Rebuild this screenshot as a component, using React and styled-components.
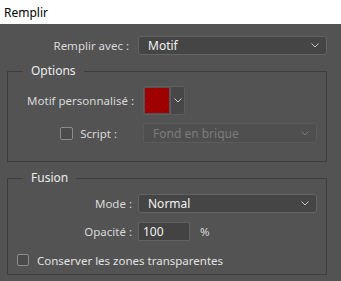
import React from 'react';
import styled, { createGlobalStyle } from 'styled-components';

const GlobalStyle = createGlobalStyle`
	html, body {
		margin: 0;
		padding: 0;
		background-color: #535353;
		font-family: "Noto Sans", "Open Sans", sans-serif;
		font-size: 11.5px;
	}
`;

const Window = styled.div`
	width: 341px;
	height: 281px;
	overflow: hidden;
	background-color: #535353;
`;

const TitleBar = styled.div`
	display: flex;
	align-items: center;
	height: 24px;
	padding-left: 4px;
	background-color: #ffffff;
	color: #000000;
	font-size: 12px;
`;

const Body = styled.div`
	display: flex;
	flex-direction: column;
	padding: 12px 14px 0 7px;
`;

const Row = styled.div`
	display: flex;
	align-items: center;
	height: ${props => props.height || 19}px;
	margin-top: ${props => props.top || 0}px;
`;

const Label = styled.div`
	display: flex;
	align-items: center;
	justify-content: flex-end;
	flex: none;
	width: ${props => props.width}px;
	margin-right: ${props => props.gap}px;
	padding-right: ${props => props.pad || 0}px;
	box-sizing: border-box;
	color: #d9d9d9;
	white-space: nowrap;
`;

const Select = styled.div`
	display: flex;
	align-items: center;
	justify-content: space-between;
	flex: 1;
	height: 100%;
	padding: 0 7px 0 9px;
	box-sizing: border-box;
	border: 1px solid ${props => props.disabled ? '#5b5b5b' : '#636363'};
	border-radius: 3px;
	background-color: ${props => props.disabled ? '#4f4f4f' : '#454545'};
	color: ${props => props.disabled ? '#7c7c7c' : '#f2f2f2'};
	font-size: 12px;
`;

const Chevron = ({ color }) => (
	<svg width="8" height="5" viewBox="0 0 8 5">
		<polyline points="0.5,0.5 4,4 7.5,0.5" fill="none" stroke={color} strokeWidth="1" />
	</svg>
);

const Group = styled.fieldset`
	margin: ${props => props.top}px 0 0 0;
	padding: 0 9px ${props => props.bottom}px 0;
	border: 1px solid #3d3d3d;
	min-width: 0;
`;

const Legend = styled.legend`
	margin-left: 15px;
	padding: 0 8px;
	height: 14px;
	line-height: 14px;
	color: #ececec;
	font-size: 12px;
`;

const PatternPicker = styled.div`
	display: flex;
	height: 29px;
	box-sizing: border-box;
	border: 1px solid #5e5e5e;
	border-radius: 3px;
	overflow: hidden;
`;

const Swatch = styled.div`
	width: 24px;
	margin: 1px;
	background-color: #a70000;
	background-image:
		repeating-linear-gradient(45deg, rgba(120, 0, 0, 0.25) 0 1px, transparent 1px 4px),
		repeating-linear-gradient(-45deg, rgba(120, 0, 0, 0.25) 0 1px, transparent 1px 4px);
`;

const PickerArrow = styled.div`
	display: flex;
	align-items: center;
	justify-content: center;
	width: 13px;
	border-left: 1px solid #5e5e5e;
	background-color: #474747;
`;

const Checkbox = styled.div`
	flex: none;
	width: ${props => props.size}px;
	height: ${props => props.size}px;
	box-sizing: border-box;
	border: 1px solid #8c8c8c;
	border-radius: 2px;
	background-color: #4b4b4b;
	margin-right: ${props => props.gap}px;
`;

const Input = styled.div`
	display: flex;
	align-items: center;
	width: 52px;
	height: 100%;
	padding-left: 4px;
	box-sizing: border-box;
	border: 1px solid #626262;
	background-color: #434343;
	color: #f2f2f2;
	font-size: 12px;
`;

const Unit = styled.span`
	margin-left: 10px;
	color: #d9d9d9;
`;

const CheckText = styled.span`
	margin-left: 8px;
	color: #e2e2e2;
	white-space: nowrap;
`;

const App = () => (
	<Window>
		<GlobalStyle />
		<TitleBar>Remplir</TitleBar>
		<Body>
			<Row>
				<Label width={122} gap={9}>Remplir avec :</Label>
				<Select>
					<span>Motif</span>
					<Chevron color="#c8c8c8" />
				</Select>
			</Row>

			<Group top={9} bottom={18}>
				<Legend>Options</Legend>
				<Row height={29} top={8}>
					<Label width={126} gap={9}>Motif personnalisé :</Label>
					<PatternPicker>
						<Swatch />
						<PickerArrow>
							<Chevron color="#d0d0d0" />
						</PickerArrow>
					</PatternPicker>
				</Row>
				<Row height={20} top={8}>
					<Label width={126} gap={9} pad={17}>
						<Checkbox size={13} gap={7} />
						Script :
					</Label>
					<Select disabled>
						<span>Fond en brique</span>
						<Chevron color="#7a7a7a" />
					</Select>
				</Row>
			</Group>

			<Group top={9} bottom={4}>
				<Legend>Fusion</Legend>
				<Row top={9}>
					<Label width={124} gap={6}>Mode :</Label>
					<Select>
						<span>Normal</span>
						<Chevron color="#c8c8c8" />
					</Select>
				</Row>
				<Row top={9}>
					<Label width={124} gap={6}>Opacité :</Label>
					<Input>100</Input>
					<Unit>%</Unit>
				</Row>
				<Row height={20} top={9}>
					<Label width={21} gap={0}>
						<Checkbox size={12} gap={0} />
					</Label>
					<CheckText>Conserver les zones transparentes</CheckText>
				</Row>
			</Group>
		</Body>
	</Window>
);

export default App;
